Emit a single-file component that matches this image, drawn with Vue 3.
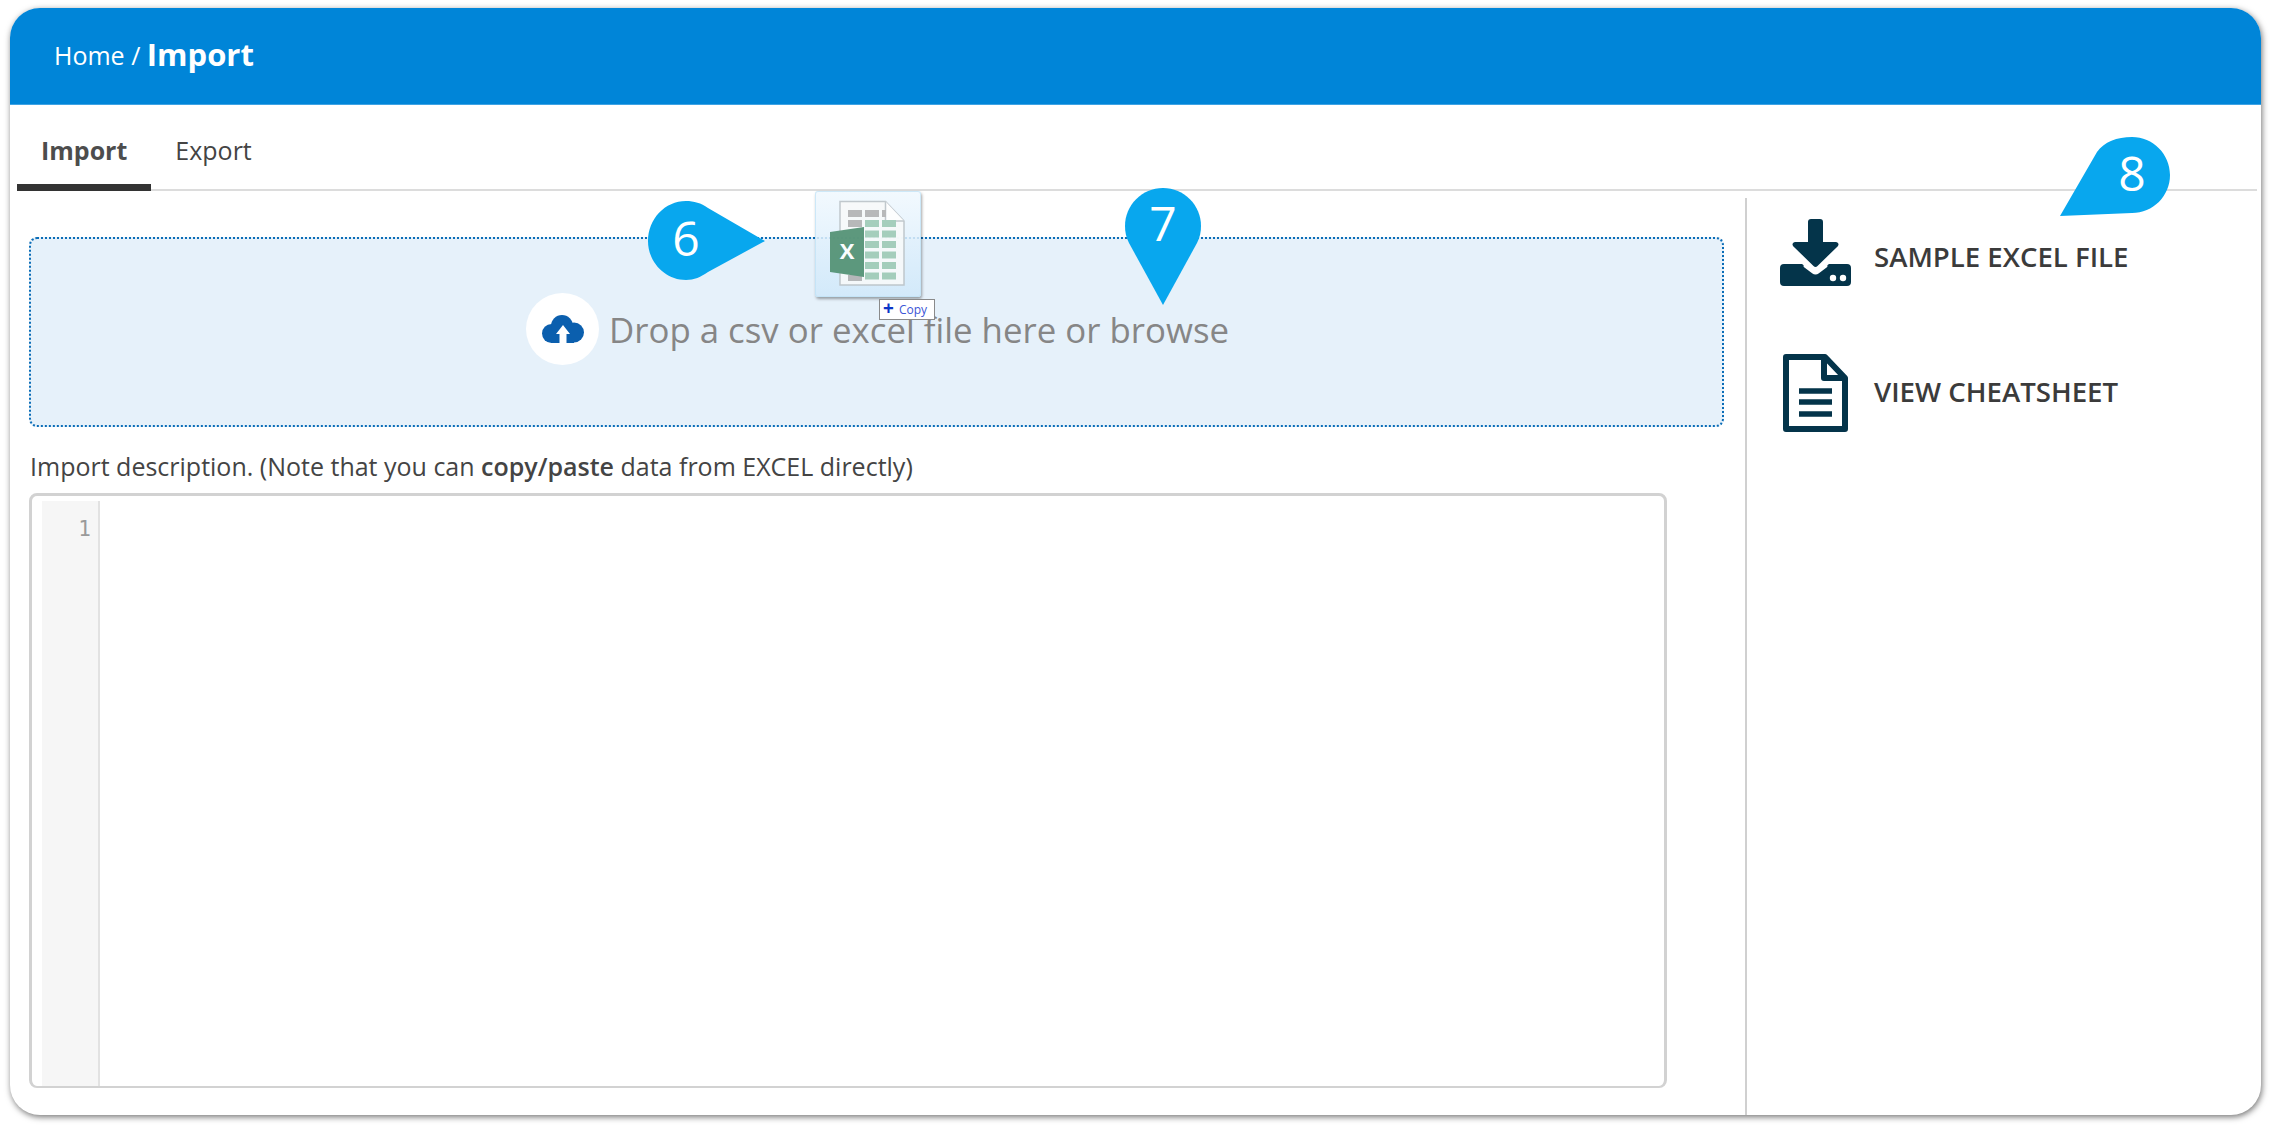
<script setup>
const cellRows = [0, 1, 2, 3, 4, 5]
</script>

<template>
  <div class="page">
    <div class="card">
      <header class="top">
        <span class="crumb">Home / </span><strong class="crumb-now">Import</strong>
      </header>
      <nav class="tabs">
        <a class="tab active">Import</a>
        <a class="tab">Export</a>
      </nav>
      <main class="body">
        <section class="left">
          <div class="drop">
            <span class="cloud">
              <svg width="42" height="28" viewBox="0 0 42 28">
                <g fill="#0b5fae">
                  <circle cx="9.500" cy="18.500" r="9.500"/>
                  <circle cx="20" cy="11" r="11"/>
                  <circle cx="32" cy="17.500" r="10"/>
                  <rect x="9" y="16" width="23" height="12"/>
                </g>
                <path fill="#fff" d="M21 10 28 19H24.500V28H17.500V19H14Z"/>
              </svg>
            </span>
            <span class="drop-text">Drop a csv or excel file here or browse</span>
          </div>
          <p class="note">Import description. (Note that you can <b>copy/paste</b> data from EXCEL directly)</p>
          <div class="editor">
            <div class="gutter">1</div>
          </div>
        </section>
        <aside class="side">
          <a class="action first">
            <span class="act-icon">
              <svg width="71" height="67" viewBox="0 0 71 67">
                <path fill="#04344a" d="M4 45H22L35.500 55 49 45H67a4 4 0 0 1 4 4V63a4 4 0 0 1-4 4H4a4 4 0 0 1-4-4V49a4 4 0 0 1 4-4Z"/>
                <path fill="#04344a" d="M31 0H40a3 3 0 0 1 3 3V23H56a2.500 2.500 0 0 1 1.800 4.200L37.500 47a3 3 0 0 1-4 0L13.200 27.200A2.500 2.500 0 0 1 15 23H28V3a3 3 0 0 1 3-3Z"/>
                <path fill="none" stroke="#fff" stroke-width="3" stroke-linecap="round" d="M25 47 33 53a4 4 0 0 0 5 0L46 47"/>
                <circle cx="53" cy="59" r="3.200" fill="#fff"/>
                <circle cx="63" cy="59" r="3.200" fill="#fff"/>
              </svg>
            </span>
            <span class="act-label">SAMPLE EXCEL FILE</span>
          </a>
          <a class="action second">
            <span class="act-icon">
              <svg width="65" height="78" viewBox="0 0 65 78">
                <path fill="none" stroke="#04344a" stroke-width="6" stroke-linejoin="round" d="M3 3H42L62 24V75H3Z"/>
                <path fill="none" stroke="#04344a" stroke-width="6" stroke-linejoin="round" d="M41 3V24H62"/>
                <path fill="none" stroke="#04344a" stroke-width="5.500" d="M16 37H49M16 48H49M16 60H49"/>
              </svg>
            </span>
            <span class="act-label">VIEW CHEATSHEET</span>
          </a>
        </aside>
      </main>
    </div>

    <div class="ghost">
      <svg width="106" height="106" viewBox="0 0 106 106">
        <path d="M25 10.500H70.500L89 30V94H25Z" fill="#f8fafa" stroke="#bcc3c8" stroke-width="1.500"/>
        <path d="M70.500 10.500V30H89" fill="#fff" stroke="#bcc3c8" stroke-width="1.500"/>
        <rect x="33" y="19" width="14" height="7" fill="#b2b2b2"/>
        <rect x="50" y="19" width="14" height="7" fill="#b2b2b2"/>
        <rect x="67" y="19" width="4" height="7" fill="#b2b2b2"/>
        <rect x="33" y="29" width="14" height="7" fill="#b2b2b2"/>
        <rect x="33" y="84" width="14" height="6" fill="#b2b2b2"/>
        <g v-for="r in cellRows" :key="r">
          <rect x="50" :y="29 + r * 10.500" width="14" height="7" fill="#9ecab5"/>
          <rect x="67" :y="29 + r * 10.500" width="14" height="7" fill="#9ecab5"/>
        </g>
        <path d="M15 41 49 36V86L15 81Z" fill="#4f8f70"/>
        <text x="32" y="68" class="ghost-x">X</text>
      </svg>
    </div>
    <div class="copy"><span class="plus">+</span><span class="copy-t">Copy</span></div>

    <svg class="pin pin6" width="130" height="90" viewBox="0 0 130 90">
      <path fill="#08a7ee" d="M39 5C47 5 54 7 61 12L118 45 61 76C54 81 47 84 39 84 18 84 1 66 1 45 1 23 18 5 39 5Z"/>
      <text x="39" y="60" class="pin-n">6</text>
    </svg>
    <svg class="pin pin7" width="90" height="130" viewBox="0 0 90 130">
      <path fill="#08a7ee" d="M45 1C66 1 83 18 83 39 83 45 82 50 79 56L45 118 11 56C8 50 7 45 7 39 7 18 24 1 45 1Z"/>
      <text x="45" y="54" class="pin-n">7</text>
    </svg>
    <svg class="pin pin8" width="130" height="90" viewBox="0 0 130 90">
      <path fill="#08a7ee" d="M87 3C108 3 125 20 125 41 125 62 108 79 87 79L15 82 52 18C59 8 72 3 87 3Z"/>
      <text x="87" y="57" class="pin-n">8</text>
    </svg>
  </div>
</template>

<style>
html, body { background: #fff; }
</style>

<style scoped>
.page {
  position: relative;
  width: 2274px;
  height: 1127px;
  padding: 8px 0 0 10px;
  box-sizing: border-box;
  overflow: hidden;
  font-family: "Open Sans", "Noto Sans", sans-serif;
  color: #3a3a3a;
}
.card {
  width: 2251px;
  height: 1107px;
  background: #fff;
  border-radius: 30px;
  overflow: hidden;
  box-shadow: 1px 2px 6px rgba(0, 0, 0, 0.55);
  display: flex;
  flex-direction: column;
}
.top {
  height: 97px;
  flex: none;
  background: #0085d8;
  border-bottom: 1px solid #3fa3e4;
  padding: 0 0 5px 44px;
  box-sizing: border-box;
  color: #fff;
  display: flex;
  align-items: center;
  white-space: pre;
}
.crumb { font-size: 25px; padding-top: 2px; }
.crumb-now { font-size: 31px; font-weight: 700; }
.tabs {
  height: 86px;
  flex: none;
  margin: 0 4px 0 7px;
  border-bottom: 2px solid #dcdcdc;
  box-sizing: border-box;
  display: flex;
  align-items: stretch;
}
.tab {
  padding: 25px 24px 0;
  margin-bottom: -2px;
  border-bottom: 7px solid transparent;
  font-size: 25px;
  line-height: 40px;
  box-sizing: border-box;
  color: #444;
}
.tab.active { font-weight: 700; border-bottom-color: #333; color: #4d4d4d; }
.body { flex: 1; display: flex; min-height: 0; }
.left { width: 1735px; flex: none; padding: 46px 0 0 19px; box-sizing: border-box; }
.drop {
  width: 1695px;
  height: 190px;
  box-sizing: border-box;
  border: 2px dotted #0b6db7;
  border-radius: 8px;
  background: #e6f1fa;
  display: flex;
  align-items: center;
  padding-left: 495px;
  gap: 10px;
}
.cloud {
  width: 73px;
  height: 72px;
  border-radius: 50%;
  background: #fff;
  display: flex;
  align-items: center;
  justify-content: center;
  margin-top: -6px;
}
.drop-text { font-size: 34.800px; color: #868686; margin-top: -5px; }
.note { margin: 23px 0 11px 1px; font-size: 25px; line-height: 32px; color: #444; }
.note b { font-weight: 600; }
.editor {
  width: 1638px;
  height: 595px;
  box-sizing: border-box;
  border: 3px solid #d2d2d2;
  border-bottom-width: 2px;
  border-radius: 8px;
  padding: 5px 0 0 10px;
  display: flex;
}
.gutter {
  width: 58px;
  box-sizing: border-box;
  background: #f6f6f6;
  border-right: 2px solid #e2e2e2;
  text-align: right;
  padding: 11px 7px 0 0;
  font-family: "DejaVu Sans Mono", monospace;
  font-size: 21px;
  line-height: 34px;
  color: #9a9a9a;
}
.side {
  flex: 1;
  margin-top: 7px;
  border-left: 2px solid #d0d0d0;
  padding-left: 32px;
}
.action {
  display: flex;
  align-items: center;
  gap: 23px;
  font-size: 27.600px;
  font-weight: 600;
  color: #3b3b3b;
}
.action.first { margin-top: 21px; }
.action.second { margin-top: 68px; }
.first .act-label { padding-top: 7px; }
.second .act-label { padding-bottom: 4px; }
.act-icon { width: 72px; flex: none; display: flex; justify-content: center; }
.act-icon svg { display: block; }
.ghost {
  position: absolute;
  left: 815px;
  top: 191px;
  width: 106px;
  height: 106px;
  border-radius: 3px;
  background: linear-gradient(180deg, rgba(240, 248, 254, 0.85), rgba(207, 232, 250, 0.85));
  box-shadow: 1px 2px 3px rgba(0, 0, 0, 0.35), inset 0 0 0 1px rgba(190, 225, 245, 0.7);
}
.ghost svg { display: block; opacity: 0.9; }
.ghost-x { font: 700 22px "Open Sans", sans-serif; fill: #fff; text-anchor: middle; }
.copy {
  position: absolute;
  left: 879px;
  top: 299px;
  width: 56px;
  height: 21px;
  box-sizing: border-box;
  background: #fff;
  border: 1px solid #8a8a8a;
  display: flex;
  align-items: center;
  padding-left: 3px;
  white-space: nowrap;
}
.plus { font: 700 19px/19px "Open Sans", sans-serif; color: #0b35c8; width: 16px; margin-top: -3px; }
.copy-t { font: 12px/19px "Open Sans", sans-serif; color: #3b55d6; }
.pin { position: absolute; display: block; }
.pin6 { left: 647px; top: 196px; }
.pin7 { left: 1118px; top: 187px; }
.pin8 { left: 2045px; top: 134px; }
.pin-n { font: 400 48px "Open Sans", sans-serif; fill: #fff; text-anchor: middle; }
</style>
